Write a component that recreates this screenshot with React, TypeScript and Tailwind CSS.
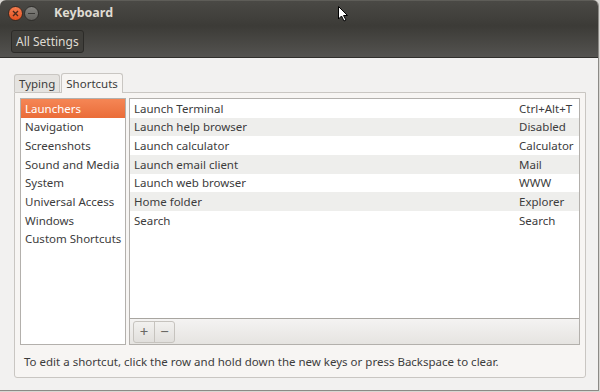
// Keyboard settings window — Ubuntu-style (Ambiance) dialog with the Shortcuts tab open

const categories = [
  "Launchers",
  "Navigation",
  "Screenshots",
  "Sound and Media",
  "System",
  "Universal Access",
  "Windows",
  "Custom Shortcuts",
];

const shortcuts = [
  { action: "Launch Terminal", keys: "Ctrl+Alt+T" },
  { action: "Launch help browser", keys: "Disabled" },
  { action: "Launch calculator", keys: "Calculator" },
  { action: "Launch email client", keys: "Mail" },
  { action: "Launch web browser", keys: "WWW" },
  { action: "Home folder", keys: "Explorer" },
  { action: "Search", keys: "Search" },
];

export default function App() {
  return (
    <div
      className="w-[600px] h-[392px] bg-[#d8d6d2] text-[11.5px] text-[#3c3c3c] overflow-hidden"
      style={{ fontFamily: '"Noto Sans", "DejaVu Sans", sans-serif' }}
    >
      <div className="w-[599px] h-[391px] flex flex-col rounded-t-[6px] overflow-hidden border-r border-b border-[#8c8a86]">
        {/* ── Title bar ───────────────────────────── */}
        <div className="relative h-[26px] flex items-center bg-gradient-to-b from-[#4a4945] to-[#3c3b37] border-t border-[#5e5d58]">
          <div className="flex items-center gap-[1px] pl-[8px]">
            <div className="w-[15px] h-[15px] rounded-full bg-gradient-to-b from-[#f47d4f] to-[#e4501d] flex items-center justify-center border border-[#3a2a22]">
              <svg width="7" height="7" viewBox="0 0 7 7">
                <path d="M1 1 L6 6 M6 1 L1 6" stroke="#4b2a1c" strokeWidth="1.4" />
              </svg>
            </div>
            <div className="w-[15px] h-[15px] rounded-full bg-gradient-to-b from-[#858480] to-[#62615d] flex items-center justify-center border border-[#2f2e2b]">
              <div className="w-[7px] h-[1.5px] bg-[#3a3936]" />
            </div>
          </div>
          <span className="ml-[15px] font-bold text-[12.5px] text-[#dfdbd2]">Keyboard</span>
          {/* mouse pointer caught in the screenshot */}
          <svg className="absolute left-[338px] top-[5px]" width="10" height="16" viewBox="0 0 10 16">
            <path d="M0.5 0.5 L0.5 13 L3.5 10 L6 15 L8 14 L5.5 9.5 L9.5 9.5 Z" fill="#fff" stroke="#000" strokeWidth="1" />
          </svg>
        </div>

        {/* ── Toolbar ─────────────────────────────── */}
        <div className="h-[32px] flex items-center px-[11px] bg-gradient-to-b from-[#3c3b37] to-[#545350] border-b border-[#302f2c]">
          <div className="h-[23px] px-[4px] flex items-center rounded-[3px] border border-[#2c2b28] bg-[#403f3b] text-[#dfdbd2] text-[12px]">
            All Settings
          </div>
        </div>

        {/* ── Window content ──────────────────────── */}
        <div className="flex-1 bg-[#f2f1f0] pl-[14px] pr-[12px] pt-[14px] pb-[12px] flex flex-col">
          {/* Tabs */}
          <div className="flex items-end h-[20px]">
            <div className="h-[18px] px-[4px] flex items-center bg-[#e5e3e0] border border-[#c9c6c2] border-b-0 rounded-t-[3px]">
              Typing
            </div>
            <div className="h-[20px] px-[4px] ml-[1px] flex items-center bg-[#f7f5f3] border border-[#c9c6c2] border-b-0 rounded-t-[3px] relative top-[1px]">
              Shortcuts
            </div>
          </div>

          {/* Notebook page */}
          <div className="flex-1 bg-[#f7f5f3] border border-[#c9c6c2] rounded-b-[3px] px-[5px] pt-[5px] flex flex-col">
            <div className="flex gap-[3px] h-[247px]">
              {/* Category list */}
              <div className="w-[106px] bg-white border border-[#b3b0ac]">
                {categories.map((c, i) => (
                  <div
                    key={c}
                    className={
                      i === 0
                        ? "h-[18.67px] px-[4px] flex items-center whitespace-nowrap bg-gradient-to-b from-[#f58655] to-[#ea6c38] text-white"
                        : "h-[18.67px] px-[4px] flex items-center whitespace-nowrap"
                    }
                  >
                    {c}
                  </div>
                ))}
              </div>

              {/* Shortcut table + add/remove toolbar */}
              <div className="flex-1 flex flex-col border border-[#b3b0ac]">
                <div className="flex-1 bg-white">
                  {shortcuts.map((s, i) => (
                    <div
                      key={s.action}
                      className={
                        i % 2 === 1
                          ? "h-[18.67px] pl-[4px] pr-[2px] flex items-center justify-between whitespace-nowrap bg-[#eeeeec]"
                          : "h-[18.67px] pl-[4px] pr-[2px] flex items-center justify-between whitespace-nowrap"
                      }
                    >
                      <span>{s.action}</span>
                      <span className="w-[58px]">{s.keys}</span>
                    </div>
                  ))}
                </div>
                <div className="h-[26px] border-t border-[#a8a5a0] bg-gradient-to-b from-[#f4f3f2] to-[#e6e4e1] flex items-center px-[3px]">
                  <div className="flex h-[22px] rounded-[3px] border border-[#c6c3be] bg-gradient-to-b from-[#f2f1ef] to-[#e1dfdc] text-[#6a6864]">
                    <div className="w-[21px] flex items-center justify-center border-r border-[#c6c3be] text-[15px] leading-none">+</div>
                    <div className="w-[19px] flex items-center justify-center text-[15px] leading-none">−</div>
                  </div>
                </div>
              </div>
            </div>

            <div className="mt-[8px] pl-[4px] whitespace-nowrap">
              To edit a shortcut, click the row and hold down the new keys or press Backspace to clear.
            </div>
          </div>
        </div>
      </div>
    </div>
  );
}
